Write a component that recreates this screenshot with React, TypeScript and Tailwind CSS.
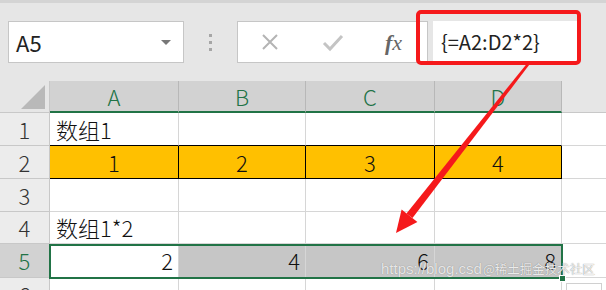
const font = "font-['Noto_Sans_CJK_SC','Noto_Sans',sans-serif]";

const cols = ["w-[129px]", "w-[127px]", "w-[129px]", "w-[127px]"];

function RowHead({ n, active = false }: { n: string; active?: boolean }) {
  return (
    <div
      className={`w-[50px] shrink-0 flex items-center justify-center border-r border-b border-[#c8c8c8] text-[22px] font-light ${
        active ? "bg-[#d2d2d2] text-[#217346]" : "bg-[#ececec] text-[#333]"
      }`}
    >
      {n}
    </div>
  );
}

function Filler() {
  return <div className="flex-1 border-b border-[#d6d6d6] bg-white" />;
}

export default function App() {
  return (
    <div className={`relative w-[606px] h-[290px] overflow-hidden bg-white ${font}`}>
      {/* 编辑栏 */}
      <div className="h-[81px] bg-[#e6e6e6] border-t-[3px] border-[#d4d4d4] flex items-start pt-[18px]">
        <div className="ml-[8px] w-[176px] h-[42px] bg-white border border-[#c6c6c6] flex items-center pl-[7px] pr-[12px]">
          <span className="flex-1 text-[22px] text-[#222]">A5</span>
          <span className="w-0 h-0 border-l-[5px] border-r-[5px] border-t-[5px] border-l-transparent border-r-transparent border-t-[#777]" />
        </div>
        <div className="w-[53px] h-[42px] flex flex-col items-center justify-center gap-[4px]">
          <span className="w-[3px] h-[3px] bg-[#a6a6a6]" />
          <span className="w-[3px] h-[3px] bg-[#a6a6a6]" />
          <span className="w-[3px] h-[3px] bg-[#a6a6a6]" />
        </div>
        <div className="w-[191px] h-[42px] bg-white border border-[#c6c6c6] flex items-center">
          <svg width="64" height="42" viewBox="0 0 64 42">
            <path d="M25 14 L39 28 M39 14 L25 28" stroke="#b4b4b4" strokeWidth="2" fill="none" />
          </svg>
          <svg width="64" height="42" viewBox="0 0 64 42">
            <path d="M22 22 L28 28 L40 15" stroke="#c4c4c4" strokeWidth="3" fill="none" />
          </svg>
          <span className="flex-1 text-center pr-[6px] text-[22px] italic font-['Liberation_Serif',serif] text-[#666]">
            <span className="font-bold">f</span>x
          </span>
        </div>
        <div className="ml-[5px] w-[147px] h-[42px] bg-white flex items-center pl-[8px] text-[20px] text-[#222] whitespace-nowrap">
          {"{=A2:D2*2}"}
        </div>
      </div>

      {/* 列标题 */}
      <div className="flex h-[32px] bg-[#e6e6e6]">
        <div className="relative w-[50px] shrink-0 border-r border-b border-[#c8c8c8]">
          <svg className="absolute right-[4px] bottom-[3px]" width="24" height="24" viewBox="0 0 24 24">
            <polygon points="24,0 24,24 0,24" fill="#b9b9b9" />
          </svg>
        </div>
        {["A", "B", "C", "D"].map((c, i) => (
          <div
            key={c}
            className={`${cols[i]} shrink-0 flex items-center justify-center bg-[#d2d2d2] border-r border-[#b8b8b8] border-b-2 border-b-[#217346] text-[22px] font-light text-[#217346]`}
          >
            {c}
          </div>
        ))}
        <div className="flex-1 border-b border-[#c8c8c8]" />
      </div>

      {/* 第1行 */}
      <div className="flex h-[33px]">
        <RowHead n="1" />
        <div className={`${cols[0]} shrink-0 border-r border-[#d6d6d6] border-b border-b-black pl-[6px] flex items-center text-[22px] font-light text-[#111]`}>
          数组1
        </div>
        {[1, 2, 3].map((i) => (
          <div key={i} className={`${cols[i]} shrink-0 border-r border-[#d6d6d6] border-b border-b-black`} />
        ))}
        <Filler />
      </div>

      {/* 第2行 */}
      <div className="flex h-[33px]">
        <RowHead n="2" />
        {["1", "2", "3", "4"].map((v, i) => (
          <div
            key={v}
            className={`${cols[i]} shrink-0 bg-[#ffc000] border-r border-b border-black flex items-center justify-center text-[22px] font-light text-[#111]`}
          >
            {v}
          </div>
        ))}
        <Filler />
      </div>

      {/* 第3行 */}
      <div className="flex h-[33px]">
        <RowHead n="3" />
        {cols.map((w, i) => (
          <div key={i} className={`${w} shrink-0 border-r border-b border-[#d6d6d6]`} />
        ))}
        <Filler />
      </div>

      {/* 第4行 */}
      <div className="flex h-[32px]">
        <RowHead n="4" />
        <div className={`${cols[0]} shrink-0 border-r border-b border-[#d6d6d6] pl-[6px] flex items-center text-[22px] font-light text-[#111] whitespace-nowrap`}>
          数组1*2
        </div>
        {[1, 2, 3].map((i) => (
          <div key={i} className={`${cols[i]} shrink-0 border-r border-b border-[#d6d6d6]`} />
        ))}
        <Filler />
      </div>

      {/* 第5行：选中区域 */}
      <div className="flex h-[34px]">
        <RowHead n="5" active />
        {["2", "4", "6", "8"].map((v, i) => (
          <div
            key={v}
            className={`${cols[i]} shrink-0 border-r border-b border-[#d6d6d6] flex items-center justify-end pr-[5px] text-[22px] font-light text-[#111] ${
              i === 0 ? "bg-white" : "bg-[#c6c6c6]"
            }`}
          >
            {v}
          </div>
        ))}
        <Filler />
      </div>

      {/* 第6行（被截断） */}
      <div className="flex h-[33px]">
        <RowHead n="6" />
        {cols.map((w, i) => (
          <div key={i} className={`${w} shrink-0 border-r border-[#d6d6d6]`} />
        ))}
        <div className="flex-1" />
      </div>

      {/* 选区边框 + 填充柄 */}
      <div className="absolute left-[49px] top-[244px] w-[514px] h-[35px] border-2 border-[#217346]" />
      <div className="absolute left-[559px] top-[275px] w-[7px] h-[7px] bg-[#217346] border border-white" />
      <div className="absolute left-[566px] top-[283px] w-[36px] h-[12px] border border-[#d0d0d0]" />

      {/* 红框 */}
      <div className="absolute left-[416px] top-[10px] w-[165px] h-[55px] border-[4px] border-[#f5191b] rounded-[5px]" />

      {/* 红色箭头 */}
      <svg className="absolute left-0 top-0" width="606" height="290" viewBox="0 0 606 290">
        <polygon points="530,63.8 528,62.2 406.5,213.4 412.5,218" fill="#f5191b" />
        <polygon points="396,233 417.4,221.9 401.6,209.5" fill="#f5191b" />
      </svg>

      {/* 水印 */}
      <div className="absolute left-[381px] top-[258px] text-[15px] text-white/80 [text-shadow:0_0_1px_#777] whitespace-nowrap font-['Liberation_Sans',sans-serif]">
        https://blog.csd
      </div>
      <div className="absolute left-[483px] top-[260px] text-[12.5px] text-white/85 [text-shadow:0_0_1px_#666] whitespace-nowrap">
        @稀土掘金技术社区
      </div>
    </div>
  );
}
